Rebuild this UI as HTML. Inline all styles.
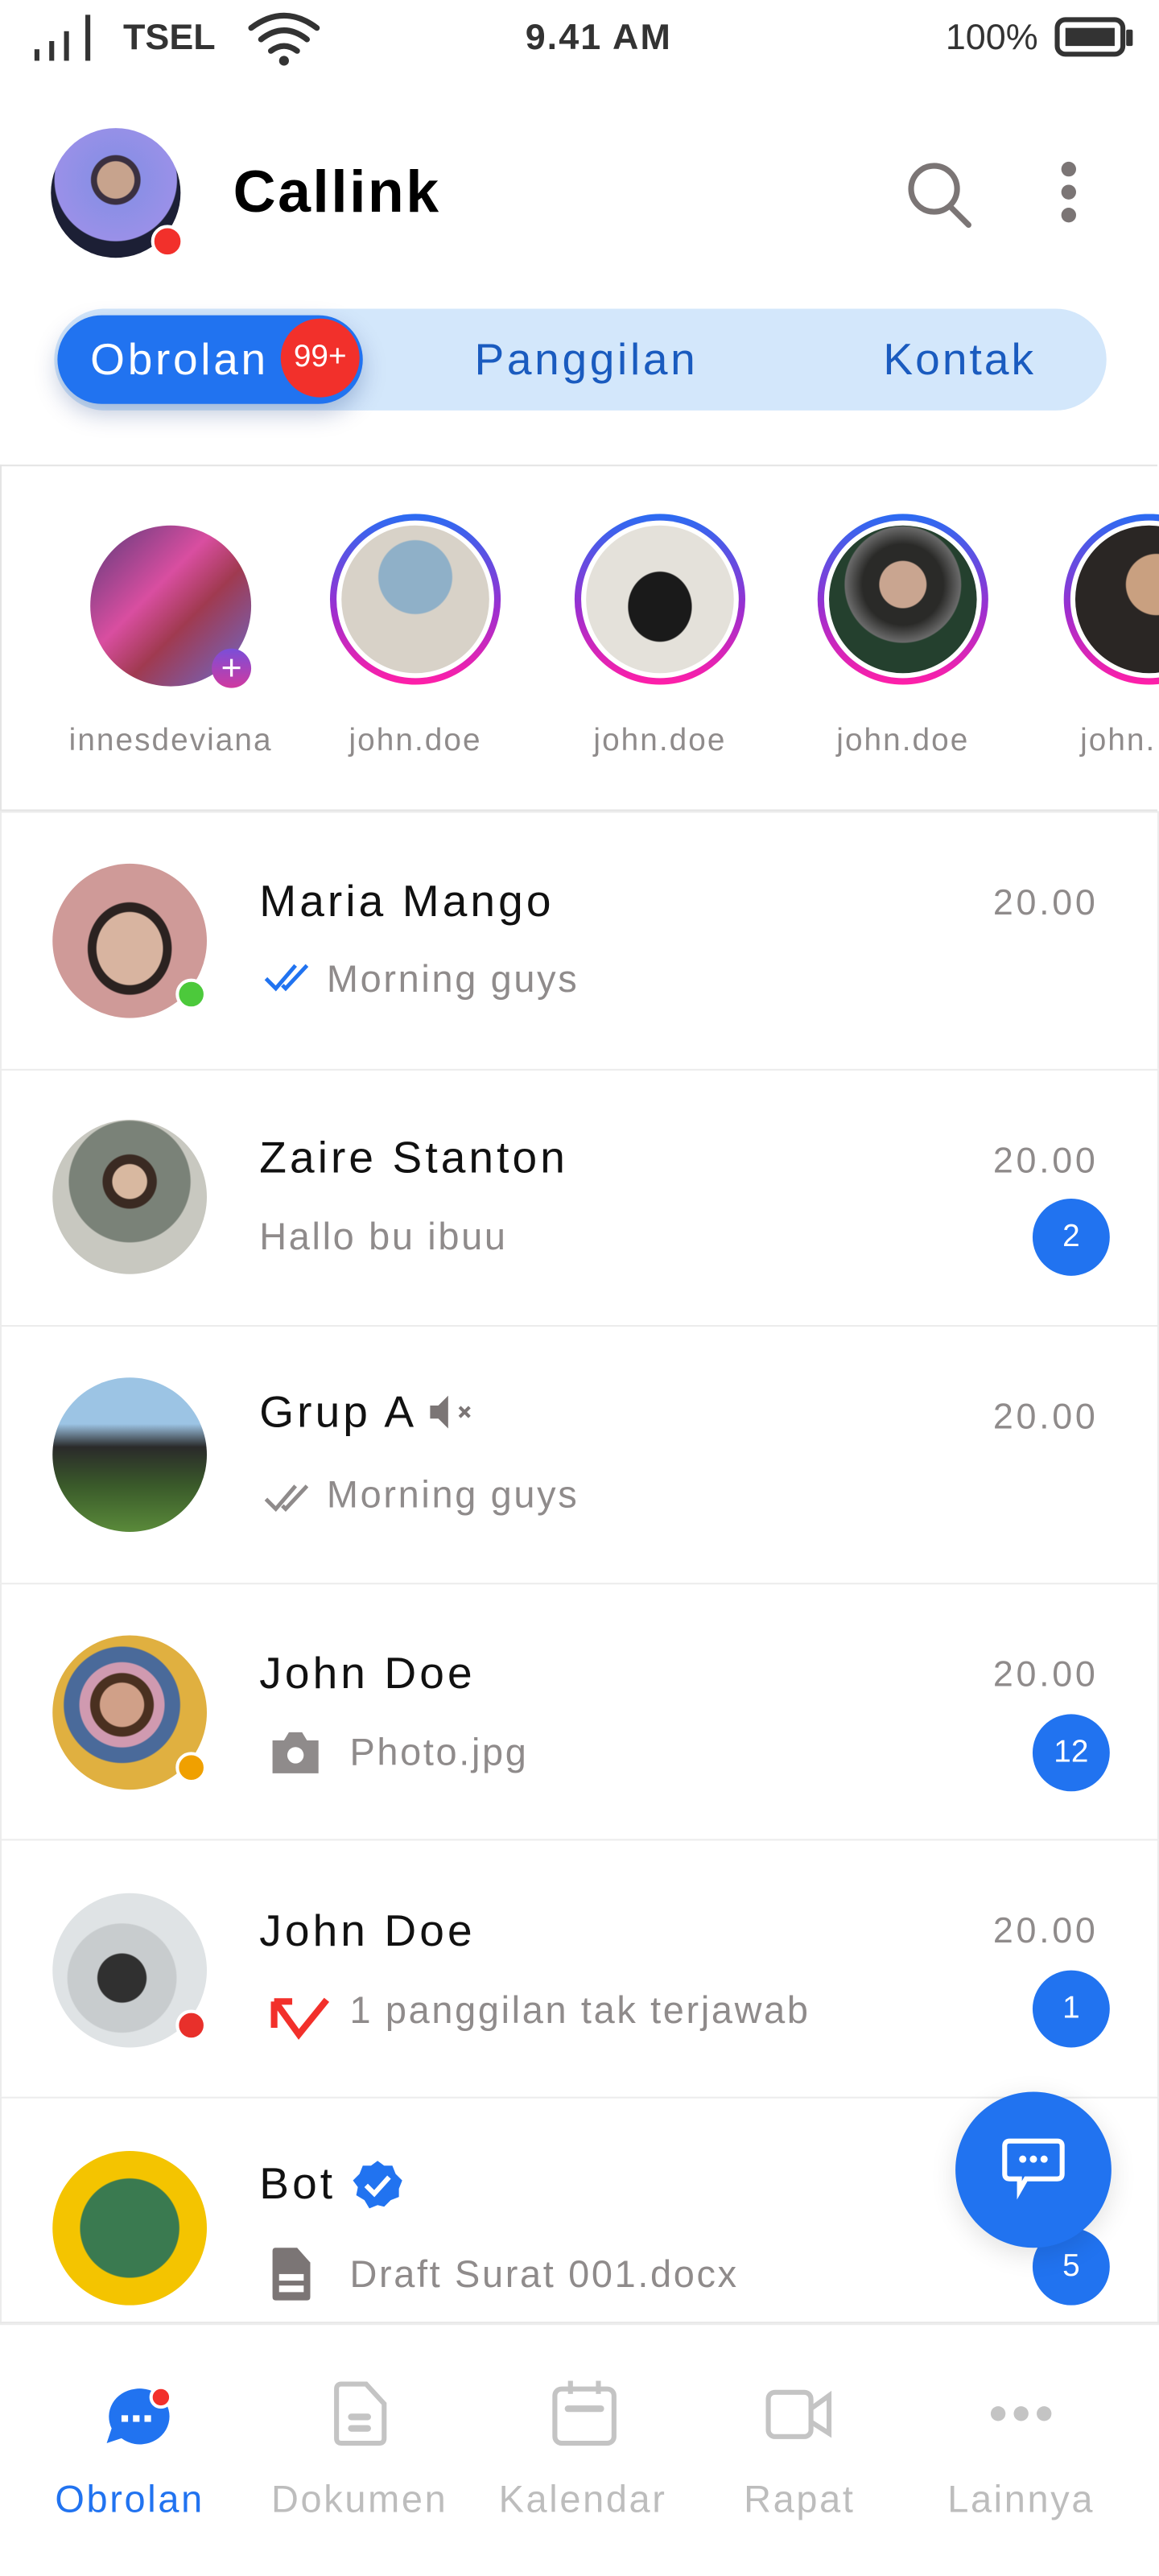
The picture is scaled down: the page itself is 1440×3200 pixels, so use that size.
<!DOCTYPE html>
<html><head><meta charset="utf-8">
<style>
html,body{margin:0;padding:0;width:1440px;height:3200px;overflow:hidden;background:#fff}
#w{position:absolute;left:0;top:0;width:706px;height:1569px;transform:scale(2.03966);transform-origin:0 0;font-family:"Liberation Sans",sans-serif;color:#000}
.a{position:absolute}
.av{position:absolute;border-radius:50%;overflow:hidden}
.row{position:absolute;left:0;width:704px;border:1px solid #ececec;background:#fff}
.name{position:absolute;left:157px;font-size:27px;letter-spacing:2px;color:#111}
.sub{position:absolute;font-size:23px;letter-spacing:1.3px;color:#8f8b8b}
.time{position:absolute;right:36px;font-size:22px;letter-spacing:1.8px;color:#8f8b8b}
.badge{position:absolute;left:628px;width:47px;height:47px;border-radius:50%;background:#2173f0;color:#fff;font-size:19px;text-align:center;line-height:47px}
.dot{position:absolute;width:15px;height:15px;border-radius:50%;border:2px solid #fff}
.st{position:absolute;top:313px;width:104px;height:104px;border-radius:50%;background:linear-gradient(180deg,#2b6cf2,#9a2fd0 55%,#ff1fa8)}
.st i{position:absolute;left:4px;top:4px;width:96px;height:96px;border-radius:50%;background:#fff}
.st b{position:absolute;left:7px;top:7px;width:90px;height:90px;border-radius:50%}
.lbl{position:absolute;top:441px;font-size:19px;color:#8f8b8b;letter-spacing:1px;text-align:center;width:140px}
.nav{position:absolute;top:1509px;font-size:23px;color:#bdbdbd;text-align:center;width:140px;letter-spacing:1.3px}
</style></head><body><div id="w">
<svg class="a" style="left:20px;top:8px" width="40" height="30"><g fill="#333"><rect x="1" y="22" width="3" height="7"/><rect x="10" y="17" width="3" height="12"/><rect x="19" y="11" width="3" height="18"/><rect x="32" y="1" width="3" height="28"/></g></svg>
<div class="a" style="left:75px;top:10px;font-size:22px;font-weight:bold;color:#333">TSEL</div>
<svg class="a" style="left:150px;top:6px" width="46" height="34" viewBox="0 0 46 34"><g fill="none" stroke="#333" stroke-width="3.5" stroke-linecap="round"><path d="M3 11 Q23 -4 43 11"/><path d="M9 18 Q23 7 37 18"/><path d="M15 25 Q23 19 31 25"/></g><circle cx="23" cy="31" r="3" fill="#333"/></svg>
<div class="a" style="left:320px;top:10px;font-size:22px;font-weight:bold;color:#333;letter-spacing:1px">9.41 AM</div>
<div class="a" style="left:576px;top:10px;font-size:22px;color:#333">100%</div>
<svg class="a" style="left:642px;top:10px" width="50" height="26"><rect x="2" y="2" width="40" height="21" rx="5" fill="none" stroke="#333" stroke-width="3"/><rect x="7" y="7" width="30" height="11" fill="#333"/><rect x="44" y="8" width="4" height="10" rx="1" fill="#333"/></svg>

<div class="av" style="left:31px;top:78px;width:79px;height:79px;background:radial-gradient(circle at 50% 40%,#c7a38d 0 18%,#3a3040 19% 24%,#8b8fe6 25%,#9a90e8 60%,#1c1f35 61%)"></div>
<div class="dot" style="left:92px;top:137px;width:16px;height:16px;background:#f2302b"></div>
<div class="a" style="left:142px;top:96px;font-size:36px;font-weight:bold;letter-spacing:1.2px">Callink</div>
<svg class="a" style="left:550px;top:96px" width="46" height="46"><circle cx="19" cy="19" r="14" fill="none" stroke="#7b7575" stroke-width="3.5"/><path d="M29 30 L40 41" stroke="#7b7575" stroke-width="3.5" stroke-linecap="round"/></svg>
<svg class="a" style="left:643px;top:98px" width="16" height="40"><g fill="#7b7575"><circle cx="8" cy="5" r="4.5"/><circle cx="8" cy="19" r="4.5"/><circle cx="8" cy="33" r="4.5"/></g></svg>

<div class="a" style="left:33px;top:188px;width:641px;height:62px;border-radius:31px;background:#d3e7fb"></div>
<div class="a" style="left:35px;top:192px;width:186px;height:54px;border-radius:27px;background:#2173f0;box-shadow:0 6px 14px rgba(0,40,120,.25)"></div>
<div class="a" style="left:55px;top:204px;font-size:27px;color:#fff;letter-spacing:1.8px">Obrolan</div>
<div class="a" style="left:171px;top:194px;width:48px;height:48px;border-radius:50%;background:#f2302b;color:#fff;font-size:19px;text-align:center;line-height:48px">99+</div>
<div class="a" style="left:289px;top:204px;font-size:27px;color:#1a5bbf;letter-spacing:1.8px">Panggilan</div>
<div class="a" style="left:538px;top:204px;font-size:27px;color:#1a5bbf;letter-spacing:1.5px">Kontak</div>

<div class="a" style="left:0;top:283px;width:704px;height:209px;border:1px solid #e4e4e4;border-right:none"></div>
<div class="av" style="left:55px;top:320px;width:98px;height:98px;background:linear-gradient(135deg,#5a3a7a,#d94ea0 40%,#a03a50 60%,#6b6bd0)"></div>
<div class="a" style="left:129px;top:395px;width:24px;height:24px;border-radius:50%;background:linear-gradient(#7a4ed8,#d03aa0);color:#fff;font-size:22px;text-align:center;line-height:23px">+</div>
<div class="st" style="left:201px"><i></i><b style="background:radial-gradient(circle at 50% 35%,#8fb0c8 0 30%,#d8d2c8 31%)"></b></div>
<div class="st" style="left:350px"><i></i><b style="background:radial-gradient(ellipse at 50% 55%,#1a1a1a 0 30%,#e4e1da 31%)"></b></div>
<div class="st" style="left:498px"><i></i><b style="background:radial-gradient(circle at 50% 40%,#c9a590 0 20%,#2a2a28 21% 35%,#6a6a6a 50%,#24402e 51%)"></b></div>
<div class="st" style="left:648px"><i></i><b style="background:radial-gradient(circle at 55% 40%,#c9a080 0 25%,#2a2624 26%)"></b></div>
<div class="lbl" style="left:34px">innesdeviana</div>
<div class="lbl" style="left:183px">john.doe</div>
<div class="lbl" style="left:332px">john.doe</div>
<div class="lbl" style="left:480px">john.doe</div>
<div class="lbl" style="left:630px;text-align:left;padding-left:28px">john.</div>

<div class="row" style="top:494px;height:157px">
 <div class="av" style="left:31px;top:31px;width:94px;height:94px;background:radial-gradient(ellipse at 50% 55%,#d8b4a0 0 30%,#2b2220 31% 38%,#cf9a98 39%)"></div>
 <div class="dot" style="left:106px;top:101px;background:#4cc93b"></div>
 <div class="name" style="top:39px">Maria Mango</div>
 <svg class="a" style="left:159px;top:90px" width="30" height="20"><path d="M2 11 L8 17 L20 3 M12 15 L14 17 L27 3" fill="none" stroke="#2173f0" stroke-width="2.4"/></svg>
 <div class="sub" style="left:198px;top:88px">Morning guys</div>
 <div class="time" style="top:42px">20.00</div>
</div>
<div class="row" style="top:651px;height:156px">
 <div class="av" style="left:31px;top:30px;width:94px;height:94px;background:radial-gradient(circle at 50% 40%,#d8b8a0 0 14%,#3a2a22 15% 22%,#7a8278 23% 50%,#c8c8c0 51%)"></div>
 <div class="name" style="top:38px">Zaire Stanton</div>
 <div class="sub" style="left:157px;top:88px">Hallo bu ibuu</div>
 <div class="time" style="top:42px">20.00</div>
 <div class="badge" style="top:78px">2</div>
</div>
<div class="row" style="top:807px;height:157px">
 <div class="av" style="left:31px;top:31px;width:94px;height:94px;background:linear-gradient(#9cc4e4 0 30%,#2a2a2a 45%,#3a5a2a 70%,#5a8a3a)"></div>
 <div class="name" style="top:37px">Grup A</div>
 <svg class="a" style="left:259px;top:40px" width="32" height="24"><path d="M2 8 H7 L13 2 V22 L7 16 H2 Z" fill="#7b7575"/><path d="M20 9 L26 15 M26 9 L20 15" stroke="#7b7575" stroke-width="2"/></svg>
 <svg class="a" style="left:159px;top:94px" width="30" height="20"><path d="M2 11 L8 17 L20 3 M12 15 L14 17 L27 3" fill="none" stroke="#8f8b8b" stroke-width="2.4"/></svg>
 <div class="sub" style="left:198px;top:89px">Morning guys</div>
 <div class="time" style="top:42px">20.00</div>
</div>
<div class="row" style="top:964px;height:156px">
 <div class="av" style="left:31px;top:31px;width:94px;height:94px;background:radial-gradient(circle at 45% 45%,#d0a088 0 18%,#4a3020 19% 26%,#d09ab0 27% 35%,#4a6a9a 36% 48%,#e0b040 49%)"></div>
 <div class="dot" style="left:106px;top:102px;background:#f0a000"></div>
 <div class="name" style="top:39px">John Doe</div>
 <svg class="a" style="left:162px;top:87px" width="34" height="30"><path d="M3 8 H10 L13 3 H21 L24 8 H31 V28 H3 Z" fill="#8f8b8b"/><circle cx="17" cy="17" r="5" fill="#fff"/></svg>
 <div class="sub" style="left:212px;top:89px">Photo.jpg</div>
 <div class="time" style="top:42px">20.00</div>
 <div class="badge" style="top:79px">12</div>
</div>
<div class="row" style="top:1120px;height:157px">
 <div class="av" style="left:31px;top:32px;width:94px;height:94px;background:radial-gradient(ellipse at 45% 55%,#303030 0 20%,#c8ccce 21% 45%,#dfe3e5 46%)"></div>
 <div class="dot" style="left:106px;top:103px;background:#e8302b"></div>
 <div class="name" style="top:40px">John Doe</div>
 <svg class="a" style="left:163px;top:94px" width="38" height="30"><path d="M3 20 V4 M3 4 H14 M5 6 L18 24 L35 3" fill="none" stroke="#f2302b" stroke-width="4"/></svg>
 <div class="sub" style="left:212px;top:90px">1 panggilan tak terjawab</div>
 <div class="time" style="top:42px">20.00</div>
 <div class="badge" style="top:79px">1</div>
</div>
<div class="row" style="top:1277px;height:137px">
 <div class="av" style="left:31px;top:32px;width:94px;height:94px;background:radial-gradient(ellipse at 50% 50%,#3a7a50 0 45%,#f4c400 46%)"></div>
 <div class="name" style="top:37px">Bot</div>
 <svg class="a" style="left:213px;top:37px" width="32" height="32"><path d="M16 1 L20 4 L25 4 L27 9 L31 13 L29 18 L29 23 L24 25 L20 29 L16 28 L11 30 L8 25 L3 22 L4 17 L1 13 L5 9 L7 4 L12 4 Z" fill="#2173f0"/><path d="M9 16 L14 21 L23 11" fill="none" stroke="#fff" stroke-width="3"/></svg>
 <svg class="a" style="left:164px;top:90px" width="26" height="34"><path d="M3 1 H16 L24 10 V31 Q24 33 22 33 H3 Q1 33 1 31 V3 Q1 1 3 1 Z" fill="#7b7575"/><rect x="5" y="17" width="15" height="4" fill="#fff"/><rect x="5" y="24" width="15" height="4" fill="#fff"/></svg>
 <div class="sub" style="left:212px;top:94px">Draft Surat 001.docx</div>
 <div class="badge" style="top:79px">5</div>
</div>

<div class="a" style="left:582px;top:1274px;width:95px;height:95px;border-radius:50%;background:#2173f0;box-shadow:0 4px 16px rgba(0,0,0,.12)"></div>
<svg class="a" style="left:610px;top:1302px" width="40" height="40"><path d="M5 2 H34 Q37 2 37 5 V22 Q37 25 34 25 H15 L11 32 L11 25 H5 Q2 25 2 22 V5 Q2 2 5 2 Z" fill="none" stroke="#fff" stroke-width="3"/><g fill="#fff"><circle cx="13" cy="13" r="2.2"/><circle cx="19.5" cy="13" r="2.2"/><circle cx="26" cy="13" r="2.2"/></g></svg>

<div class="a" style="left:0;top:1414px;width:706px;height:1px;background:#e8e8e8"></div>
<svg class="a" style="left:62px;top:1451px" width="44" height="40"><path d="M20 4 A18 17 0 1 1 12 34 L3 37 L6 28 A18 17 0 0 1 20 4 Z" fill="#2173f0"/><g fill="#fff"><rect x="12" y="20" width="4" height="4"/><rect x="19" y="20" width="4" height="4"/><rect x="26" y="20" width="4" height="4"/></g><circle cx="36" cy="9" r="6" fill="#f2302b" stroke="#fff" stroke-width="2"/></svg>
<svg class="a" style="left:203px;top:1450px" width="34" height="40"><path d="M5 2 H20 L31 14 V35 Q31 38 28 38 H5 Q2 38 2 35 V5 Q2 2 5 2 Z" fill="none" stroke="#c4c4c4" stroke-width="3"/><rect x="9" y="20" width="14" height="4" rx="2" fill="#c4c4c4"/><rect x="9" y="27" width="14" height="4" rx="2" fill="#c4c4c4"/></svg>
<svg class="a" style="left:336px;top:1449px" width="40" height="42"><rect x="2" y="6" width="36" height="33" rx="4" fill="none" stroke="#c4c4c4" stroke-width="3"/><rect x="10" y="1" width="3" height="8" fill="#c4c4c4"/><rect x="27" y="1" width="3" height="8" fill="#c4c4c4"/><rect x="8" y="16" width="24" height="4" rx="2" fill="#c4c4c4"/></svg>
<svg class="a" style="left:466px;top:1455px" width="42" height="32"><rect x="2" y="2" width="26" height="27" rx="4" fill="none" stroke="#c4c4c4" stroke-width="3"/><path d="M28 12 L39 4 V27 L28 20" fill="none" stroke="#c4c4c4" stroke-width="3"/></svg>
<svg class="a" style="left:602px;top:1462px" width="40" height="16"><g fill="#c4c4c4"><circle cx="6" cy="8" r="4.5"/><circle cx="20" cy="8" r="4.5"/><circle cx="34" cy="8" r="4.5"/></g></svg>
<div class="nav" style="left:9px;color:#2173f0">Obrolan</div>
<div class="nav" style="left:149px">Dokumen</div>
<div class="nav" style="left:285px">Kalendar</div>
<div class="nav" style="left:417px">Rapat</div>
<div class="nav" style="left:552px">Lainnya</div>
</div></body></html>
